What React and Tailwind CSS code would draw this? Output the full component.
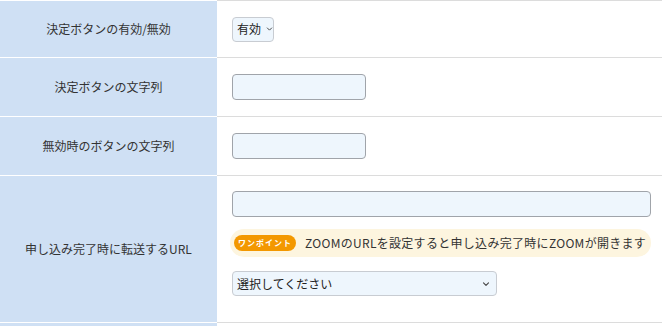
import React from "react";

const font = { fontFamily: '"Noto Sans CJK JP", "Noto Sans", sans-serif' };

const Chevron = ({ className = "" }) => (
  <svg width="8" height="6" viewBox="0 0 8 6" className={className}>
    <path d="M1.5 1.8 L4 4.3 L6.5 1.8" fill="none" stroke="#444" strokeWidth="1.1" strokeLinecap="round" strokeLinejoin="round" />
  </svg>
);

const Row = ({ label, h, children, top }) => (
  <div className="flex">
    <div
      className={`w-[217px] shrink-0 bg-[#cfe0f4] border-b border-white flex items-center justify-center text-[12px] text-[#333] ${h}`}
    >
      {label}
    </div>
    <div
      className={`flex-1 px-[15px] flex flex-col border-b border-[#dcdcdc] ${top ? "justify-start pt-[15px]" : "justify-center"}`}
    >
      {children}
    </div>
  </div>
);

export default function App() {
  return (
    <div className="w-[662px] h-[326px] overflow-hidden bg-white" style={font}>
      <div className="flex h-px">
        <div className="w-[217px] bg-white" />
        <div className="flex-1 bg-[#dcdcdc]" />
      </div>
      <Row label="決定ボタンの有効/無効" h="h-[57px]">
        <div className="w-[42px] h-[25px] shrink-0 whitespace-nowrap rounded-[4px] border border-[#c8ccd2] bg-[#eef6fd] flex items-center pl-[4px] gap-[5px] text-[12px] text-[#222]">
          有効
          <Chevron />
        </div>
      </Row>
      <Row label="決定ボタンの文字列" h="h-[59px]">
        <div className="w-[134px] h-[26px] rounded-[4px] border border-[#a0a4aa] bg-[#eef6fd]" />
      </Row>
      <Row label="無効時のボタンの文字列" h="h-[59px]">
        <div className="w-[134px] h-[26px] rounded-[4px] border border-[#a0a4aa] bg-[#eef6fd]" />
      </Row>
      <Row label="申し込み完了時に転送するURL" h="h-[147px]" top>
        <div className="w-[419px] h-[26px] shrink-0 rounded-[4px] border border-[#a0a4aa] bg-[#eef6fd]" />
        <div className="mt-[12px] ml-[-2px] w-[421px] h-[28px] shrink-0 rounded-full bg-[#fdf5df] flex items-center pl-[4px] gap-[9px] whitespace-nowrap">
          <span className="h-[16px] w-[62px] rounded-full bg-[#f39800] text-white text-[8px] font-bold flex items-center justify-center tracking-[1px]">
            ワンポイント
          </span>
          <span className="text-[12px] text-[#333] tracking-[0.3px]">
            ZOOMのURLを設定すると申し込み完了時にZOOMが開きます
          </span>
        </div>
        <div className="mt-[14px] w-[265px] h-[25px] shrink-0 rounded-[4px] border border-[#c8ccd2] bg-[#eef6fd] flex items-center justify-between pl-[4px] pr-[6px] text-[12px] text-[#222]">
          選択してください
          <Chevron />
        </div>
      </Row>
      <div className="flex h-[10px]">
        <div className="w-[217px] bg-[#cfe0f4]" />
        <div className="flex-1" />
      </div>
    </div>
  );
}
